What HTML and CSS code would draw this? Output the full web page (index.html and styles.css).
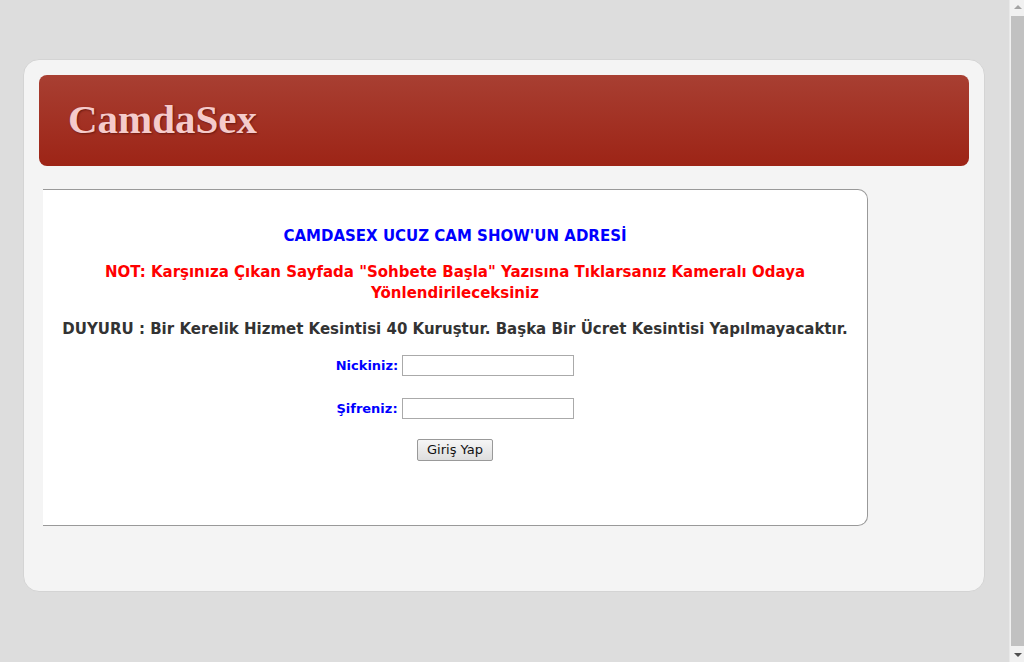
FILE: index.html
```html
<!DOCTYPE html>
<html lang="tr">
<head>
<meta charset="utf-8">
<title>CamdaSex</title>
<link rel="stylesheet" href="styles.css">
</head>
<body>
<div class="wrap">
  <header class="banner">
    <h1 class="logo">CamdaSex</h1>
  </header>
  <section class="box">
    <p class="title">CAMDASEX UCUZ CAM SHOW'UN ADRESİ</p>
    <p class="note">NOT: Karşınıza Çıkan Sayfada "Sohbete Başla" Yazısına Tıklarsanız Kameralı Odaya Yönlendirileceksiniz</p>
    <p class="notice">DUYURU : Bir Kerelik Hizmet Kesintisi 40 Kuruştur. Başka Bir Ücret Kesintisi Yapılmayacaktır.</p>
    <form class="login">
      <div class="row"><label class="lbl">Nickiniz:</label><input class="inp" type="text"></div>
      <div class="row"><label class="lbl">Şifreniz:</label><input class="inp" type="password"></div>
      <div class="row row-btn"><button class="btn" type="button">Giriş Yap</button></div>
    </form>
  </section>
</div>
<div class="scrollbar" aria-hidden="true">
  <span class="arrow up"></span>
  <span class="thumb"></span>
  <span class="arrow down"></span>
</div>
</body>
</html>
```
FILE: styles.css
```css
html, body { margin: 0; padding: 0; }
body {
  background: #dddddd;
  font-family: "DejaVu Sans", Verdana, sans-serif;
  padding: 59px 16px 80px 0;
}
.wrap {
  width: 930px;
  margin: 0 auto;
  background: #f4f4f4;
  border: 1px solid #d4d4d4;
  border-radius: 16px;
  padding: 15px 15px 65px;
}
.banner {
  height: 91px;
  border-radius: 8px;
  background: linear-gradient(to bottom, #a83f32 0%, #9d2416 100%);
  padding: 0 29px;
  display: flex;
  align-items: center;
}
.logo {
  margin: 0;
  font-family: "Liberation Serif", "Times New Roman", serif;
  font-weight: bold;
  font-size: 41px;
  color: #f5cbcb;
  text-shadow: 1px 1px 2px #6a1a10;
  line-height: 1;
  padding-bottom: 3px;
}
.box {
  margin: 23px 0 0 4px;
  width: 825px;
  height: 337px;
  background: #fff;
  border: 1px solid #999;
  border-left: none;
  border-radius: 0 10px 10px 0;
  box-sizing: border-box;
  padding-top: 36px;
  text-align: center;
  font-weight: bold;
}
.box p { margin: 0; }
.title { color: #0000ff; font-size: 15px; line-height: 21px; }
.note { color: #ff0000; font-size: 15px; line-height: 21px; margin-top: 15px !important; padding: 0 40px; }
.notice { color: #333; font-size: 15px; line-height: 21px; margin-top: 15px !important; }
.login { margin-top: 15px; }
.row { display: flex; justify-content: center; align-items: center; height: 21px; margin-bottom: 22px; }
.row-btn { margin-top: -2px; }
.lbl { color: #0000ff; font-size: 13px; margin-right: 4px; }
.inp {
  width: 168px; height: 17px; padding: 1px;
  border: 1px solid #aaa; margin: 0;
}
.btn {
  font-family: "DejaVu Sans", Verdana, sans-serif;
  font-size: 13px;
  padding: 2px 9px;
  height: 22px;
  border: 1px solid #999;
  border-radius: 2px;
  background: linear-gradient(#f6f6f6, #dedede);
  color: #111;
  font-weight: normal;
}
.scrollbar {
  position: fixed;
  top: 0;
  right: 0;
  width: 15px;
  height: 100%;
  background: #f1f1f1;
  border-left: 1px solid #e8e8e8;
  box-sizing: border-box;
  display: flex;
  flex-direction: column;
  align-items: center;
}
.thumb {
  flex: 1;
  width: 13px;
  background: #c1c1c1;
  margin: 2px 0 2px 1px;
}
.arrow {
  width: 0; height: 0;
  border-left: 4px solid transparent;
  border-right: 4px solid transparent;
  margin: 5px 0 5px 1px;
}
.arrow.up { border-bottom: 4px solid #a3a3a3; }
.arrow.down { border-top: 4px solid #505050; }
```
